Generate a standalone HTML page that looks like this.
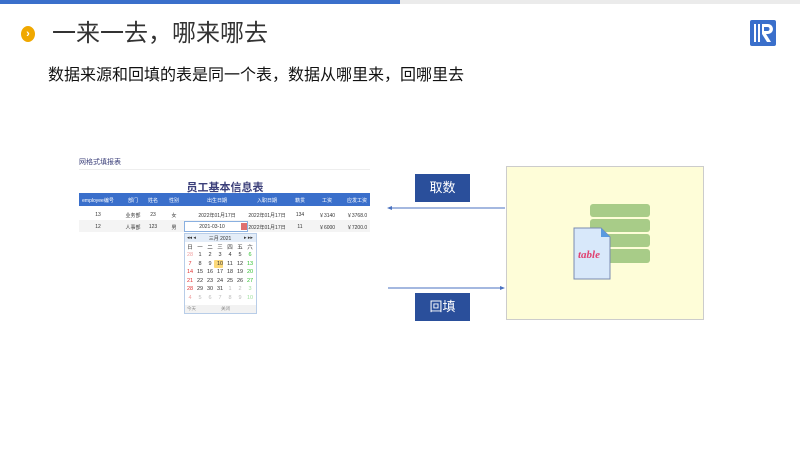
<!DOCTYPE html>
<html><head><meta charset="utf-8"><style>
*{margin:0;padding:0;box-sizing:border-box}
body{width:800px;height:450px;background:#fff;position:relative;overflow:hidden;font-family:"Liberation Sans","Noto Sans CJK SC",sans-serif}
.a{position:absolute;white-space:nowrap}
.c{position:absolute;transform:translateX(-50%);white-space:nowrap}
.t{font-size:5px;color:#333}
.h{font-size:5px;color:#fff}
.cal{font-size:5.5px;color:#333}
</style></head><body>
<div class="a" style="left:0;top:0;width:400px;height:4px;background:#3a6fcb"></div>
<div class="a" style="left:400px;top:0;width:400px;height:4px;background:#ebebeb"></div>
<div class="a" style="left:21px;top:26px;width:14px;height:16px;border-radius:50%;background:#f0a800;color:#fff;font-size:11px;font-weight:bold;text-align:center;line-height:16px">›</div>
<div class="a" style="left:52px;top:19px;font-size:24px;color:#333;line-height:30px">一来一去，哪来哪去</div>
<svg class="a" style="left:750px;top:20px" width="26" height="26" viewBox="0 0 26 26"><rect width="26" height="26" rx="2" fill="#3a6fcb"/><rect x="4" y="4" width="2" height="18" fill="#fff"/><rect x="8" y="4" width="2" height="18" fill="#fff"/><path d="M12 4h6a5 5 0 0 1 0 10h-2l5 8h-4l-5-8z" fill="#fff"/><path d="M14 7h3.5a2 2 0 0 1 0 4H14z" fill="#3a6fcb"/></svg>
<div class="a" style="left:48px;top:66px;font-size:16px;color:#111;line-height:20px">数据来源和回填的表是同一个表，数据从哪里来，回哪里去</div>

<div class="a" style="left:79px;top:157px;font-size:7px;color:#3b3f7a">网格式填报表</div>
<div class="a" style="left:79px;top:169px;width:291px;height:1px;background:#eee"></div>
<div class="c" style="left:225px;top:179px;font-size:11px;font-weight:bold;color:#3b3f7a">员工基本信息表</div>
<div class="a" style="left:79px;top:193px;width:291px;height:13px;background:#3a6fcb"></div>
<div class="a" style="left:79px;top:220px;width:291px;height:12px;background:#f4f4f4"></div>
<div class="c h" style="left:98px;top:197px">employee编号</div>
<div class="c h" style="left:133px;top:197px">部门</div>
<div class="c h" style="left:153px;top:197px">姓名</div>
<div class="c h" style="left:174px;top:197px">性别</div>
<div class="c h" style="left:217px;top:197px">出生日期</div>
<div class="c h" style="left:267px;top:197px">入职日期</div>
<div class="c h" style="left:300px;top:197px">籍贯</div>
<div class="c h" style="left:327px;top:197px">工资</div>
<div class="c h" style="left:357px;top:197px">应发工资</div>
<div class="c t" style="left:98px;top:212px">13</div>
<div class="c t" style="left:133px;top:212px">业务部</div>
<div class="c t" style="left:153px;top:212px">23</div>
<div class="c t" style="left:174px;top:212px">女</div>
<div class="c t" style="left:217px;top:212px">2022年01月17日</div>
<div class="c t" style="left:267px;top:212px">2022年01月17日</div>
<div class="c t" style="left:300px;top:212px">134</div>
<div class="c t" style="left:327px;top:212px">￥3140</div>
<div class="c t" style="left:357px;top:212px">￥3768.0</div>
<div class="c t" style="left:98px;top:224px">12</div>
<div class="c t" style="left:133px;top:224px">人事部</div>
<div class="c t" style="left:153px;top:224px">123</div>
<div class="c t" style="left:174px;top:224px">男</div>
<div class="a" style="left:184px;top:221px;width:64px;height:11px;border:1px solid #8ab0e0;background:#fff"></div>
<div class="c t" style="left:212px;top:224px">2021-03-10</div>
<div class="a" style="left:241px;top:223px;width:6px;height:7px;background:#e07070"></div>
<div class="c t" style="left:267px;top:224px">2022年01月17日</div>
<div class="c t" style="left:300px;top:224px">11</div>
<div class="c t" style="left:327px;top:224px">￥6000</div>
<div class="c t" style="left:357px;top:224px">￥7200.0</div>

<div class="a" style="left:184px;top:233px;width:73px;height:81px;border:1px solid #b8cde8;background:#fff"></div>
<div class="a" style="left:185px;top:234px;width:71px;height:8px;background:#e4edf8"></div>
<div class="a" style="left:185px;top:305px;width:71px;height:8px;background:#f2f2f2"></div>
<div class="a cal" style="left:187px;top:235px;font-size:5px">◂◂ ◂</div>
<div class="c cal" style="left:220px;top:235px;font-size:5px">三月 2021</div>
<div class="a cal" style="left:244px;top:235px;font-size:5px">▸ ▸▸</div>
<div class="a" style="left:214px;top:260px;width:9px;height:8px;background:#fcd97a;border-radius:1px"></div>
<div id="cal"></div>
<div class="a cal" style="left:187px;top:306px;font-size:4.5px;color:#888">今天</div>
<div class="a cal" style="left:221px;top:306px;font-size:4.5px;color:#888">关闭</div>

<div class="a" style="left:415px;top:174px;width:55px;height:28px;background:#2a4f9b;color:#fff;font-size:13px;text-align:center;line-height:28px">取数</div>
<div class="a" style="left:415px;top:293px;width:55px;height:28px;background:#2a4f9b;color:#fff;font-size:13px;text-align:center;line-height:28px">回填</div>
<svg class="a" style="left:385px;top:200px" width="120" height="95"><line x1="6" y1="8" x2="120" y2="8" stroke="#4a72c0" stroke-width="1"/><path d="M2 8l5-2v4z" fill="#4a72c0"/><line x1="3" y1="88" x2="116" y2="88" stroke="#4a72c0" stroke-width="1"/><path d="M120 88l-5-2v4z" fill="#4a72c0"/></svg>

<div class="a" style="left:506px;top:166px;width:198px;height:154px;background:#fefdd8;border:1px solid #ccc"></div>
<svg class="a" style="left:570px;top:200px" width="80" height="85" viewBox="0 0 80 85">
<g fill="#a8cc88"><rect x="20" y="4" width="60" height="13" rx="3"/><rect x="20" y="19" width="60" height="13" rx="3"/><rect x="20" y="34" width="60" height="13" rx="3"/><rect x="20" y="49" width="60" height="14" rx="3"/></g>
<path d="M4 28h27l9 9v42H4z" fill="#d8e8fa" stroke="#7a8ab0"/><path d="M31 28v9h9z" fill="#5a9ae0"/>
<text x="8" y="58" font-family="Liberation Serif,serif" font-style="italic" font-weight="bold" font-size="11" fill="#e04070">table</text></svg>
<script>
var d=document.getElementById('cal'),h='';
var cx=[190,200,210,220,230,240,250];
var wd=['日','一','二','三','四','五','六'];
wd.forEach(function(w,i){h+='<div class="c cal" style="left:'+cx[i]+'px;top:243px">'+w+'</div>'});
var rows=[[28,1,2,3,4,5,6],[7,8,9,10,11,12,13],[14,15,16,17,18,19,20],[21,22,23,24,25,26,27],[28,29,30,31,1,2,3],[4,5,6,7,8,9,10]];
rows.forEach(function(r,ri){r.forEach(function(n,i){var col='#333';var dim=(ri==0&&i==0)||(ri==4&&i>=4)||ri==5;
if(i==0)col='#e03030';if(i==6)col='#30c030';if(dim)col=i==0?'#f0a0a0':(i==6?'#a0e0a0':'#bbb');
h+='<div class="c cal" style="left:'+cx[i]+'px;top:'+(252+ri*8.5)+'px;color:'+col+'">'+n+'</div>'})});
d.innerHTML=h;
</script>
</body></html>
